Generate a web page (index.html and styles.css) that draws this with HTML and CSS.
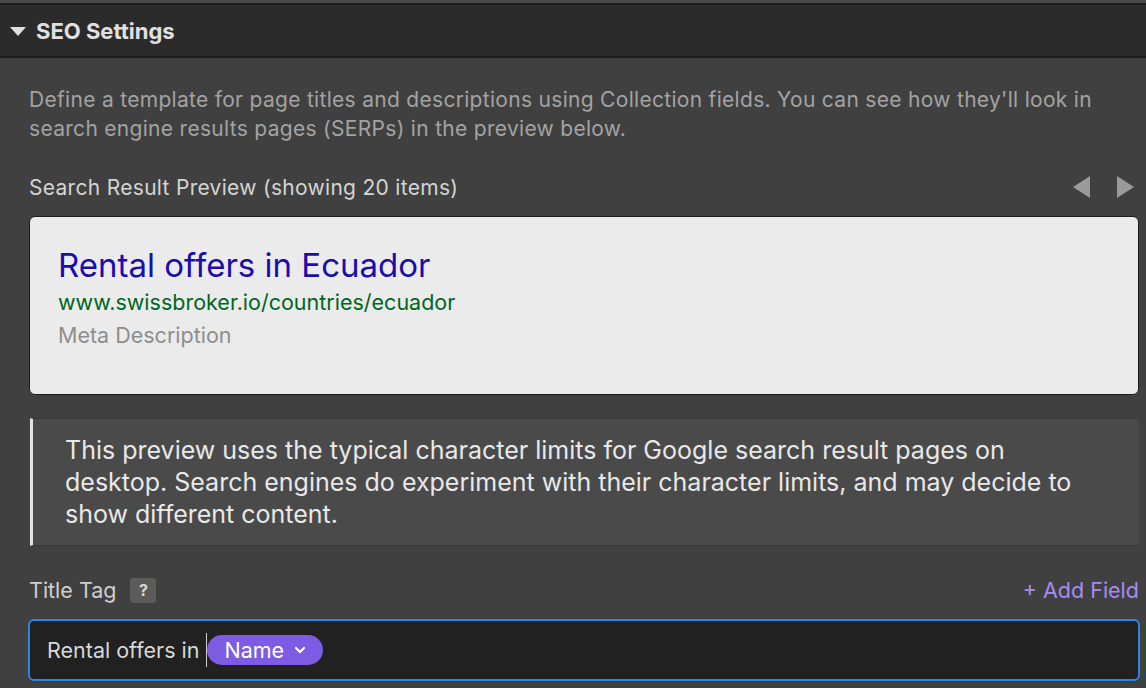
FILE: index.html
```html
<!DOCTYPE html>
<html lang="en">
<head>
    <meta charset="UTF-8">
    <title>SEO Settings</title>
    <link rel="stylesheet" href="styles.css">
</head>
<body>
    <div class="panel">
        <!-- header -->
        <div class="panel-header">
            <span class="caret"></span>
            SEO Settings
        </div>

        <div class="panel-body">
            <p class="intro">Define a template for page titles and descriptions using Collection fields. You can see how they'll look in search engine results pages (SERPs) in the preview below.</p>

            <div class="preview-head">
                <span>Search Result Preview (showing 20 items)</span>
                <div class="pager">
                    <svg width="18" height="22" viewBox="0 0 18 22"><polygon points="17,0 17,22 0,11" fill="#9a9a9a"/></svg>
                    <svg width="18" height="22" viewBox="0 0 18 22"><polygon points="1,0 1,22 18,11" fill="#9a9a9a"/></svg>
                </div>
            </div>

            <div class="serp">
                <div class="serp-title">Rental offers in Ecuador</div>
                <div class="serp-url">www.swissbroker.io/countries/ecuador</div>
                <div class="serp-desc">Meta Description</div>
            </div>

            <div class="notice">This preview uses the typical character limits for Google search result pages on desktop. Search engines do experiment with their character limits, and may decide to show different content.</div>

            <div class="field-head">
                <span class="field-label">Title Tag</span>
                <span class="help">?</span>
                <span class="add-field">+ Add Field</span>
            </div>
            <div class="field-input">
                <span>Rental offers in</span><span class="cursor"></span><span class="token">Name
                    <svg width="12" height="8" viewBox="0 0 12 8"><path d="M2 2 L6 6 L10 2" stroke="#fff" stroke-width="2.2" fill="none" stroke-linecap="round" stroke-linejoin="round"/></svg>
                </span>
            </div>
        </div>
    </div>
</body>
</html>
```
FILE: styles.css
```css
body {
    margin: 0;
    background-color: #404040;
    font-family: Inter, 'Noto Sans', sans-serif;
    overflow: hidden;
}

.panel {
    border-top: 3px solid #4b4b4b;
}

/* header */
.panel-header {
    height: 51px;
    background-color: #2b2b2b;
    border-top: 2px solid #1c1c1c;
    border-bottom: 2px solid #1e1e1e;
    display: flex;
    align-items: center;
    padding-left: 10px;
    font-size: 22px;
    font-weight: 700;
    color: #e0e0e0;
}

.caret {
    width: 0;
    height: 0;
    border-left: 8px solid transparent;
    border-right: 8px solid transparent;
    border-top: 9px solid #e0e0e0;
    margin-right: 10px;
    margin-top: 1px;
}

/* body */
.panel-body {
    padding: 27px 7px 0 29px;
}

.intro {
    margin: 0;
    font-size: 21px;
    line-height: 29px;
    letter-spacing: 0.3px;
    color: #a3a3a3;
}

.preview-head {
    display: flex;
    justify-content: space-between;
    align-items: center;
    height: 26px;
    margin-top: 31px;
    font-size: 21px;
    letter-spacing: 0.3px;
    color: #d4d4d4;
}

.pager {
    display: flex;
    gap: 25px;
    padding-right: 5px;
}

.serp {
    margin-top: 16px;
    height: 179px;
    box-sizing: border-box;
    padding: 26px 28px;
    background-color: #ebebeb;
    border: 1px solid #1d1d1d;
    border-radius: 6px;
}

.serp-title {
    font-size: 33px;
    color: #1a0dab;
    line-height: 44px;
}

.serp-url {
    font-size: 21.5px;
    color: #006621;
    line-height: 30px;
}

.serp-desc {
    font-size: 21.5px;
    color: #8e8e8e;
    line-height: 36px;
}

.notice {
    margin-top: 23px;
    margin-left: 1px;
    padding: 15px 40px 15px 32px;
    background-color: #4a4a4a;
    border-left: 3px solid #e2e2e2;
    border-top: 1px solid #383838;
    border-bottom: 1px solid #383838;
    font-size: 25px;
    line-height: 32px;
    color: #e8e8e8;
}

.field-head {
    display: flex;
    align-items: center;
    margin-top: 31px;
    font-size: 21.5px;
}

.field-label {
    color: #cfcfcf;
}

.help {
    margin-left: 14px;
    width: 26px;
    height: 25px;
    display: flex;
    align-items: center;
    justify-content: center;
    background-color: #5b5b5b;
    border-radius: 3px;
    font-size: 16px;
    font-weight: 700;
    color: #d8d8d8;
}

.add-field {
    margin-left: auto;
    color: #a58cf2;
}

.field-input {
    margin-top: 16px;
    margin-left: -1px;
    margin-right: -1px;
    height: 62px;
    box-sizing: border-box;
    display: flex;
    align-items: center;
    padding-left: 17px;
    background-color: #212121;
    border: 2px solid #2e86de;
    border-radius: 6px;
    font-size: 21.5px;
    color: #d8d8d8;
}

.cursor {
    width: 1px;
    height: 34px;
    background-color: #cfcfcf;
    margin-left: 6px;
}

.token {
    display: flex;
    align-items: center;
    gap: 10px;
    height: 30px;
    padding: 0 17px 0 18px;
    background-color: #7d5be3;
    border-radius: 15px;
    color: #ffffff;
}
```
